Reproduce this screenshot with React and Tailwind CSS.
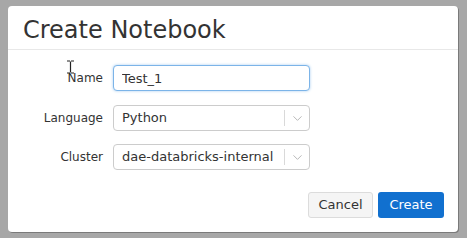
import { ChevronDown } from 'lucide-react';

function SelectBox({ value }) {
  return (
    <div className="flex h-[26px] w-[197px] items-center rounded-[4px] border border-[#cccccc] bg-white pl-[8px]">
      <span className="flex-1 truncate text-[13px] text-[#333]">{value}</span>
      <span className="h-[16px] w-px bg-[#d9d9d9]" />
      <span className="flex w-[24px] items-center justify-center text-[#b3b3b3]">
        <ChevronDown size={15} strokeWidth={1.5} />
      </span>
    </div>
  );
}

function Row({ label, children, className = '' }) {
  return (
    <div className={`flex items-center ${className}`}>
      <label className="w-[95px] text-right text-[12px] text-[#333]">{label}</label>
      <div className="ml-[10px]">{children}</div>
    </div>
  );
}

export default function App() {
  return (
    <div
      className="h-[238px] w-[467px] bg-[#a7a7a7] pl-[8px] pt-[6px]"
      style={{ fontFamily: '"DejaVu Sans", sans-serif' }}
    >
      <div className="relative flex h-[226px] w-[450px] flex-col rounded-[4px] bg-white shadow-[1px_1px_0_#7a7a7a]">
        {/* header */}
        <div className="flex h-[44px] items-center border-b border-[#e8e8e8] pl-[15px] pt-[4px]">
          <h1 className="text-[24px] leading-none text-[#333]">Create Notebook</h1>
        </div>

        {/* form */}
        <div className="flex flex-col pt-[15px]">
          <Row label="Name">
            <input
              readOnly
              value="Test_1"
              className="h-[26px] w-[197px] rounded-[4px] border border-[#7cb4e8] bg-white px-[8px] text-[13px] text-[#333] shadow-[0_0_3px_#a6cdf0] outline-none"
            />
          </Row>
          <Row label="Language" className="mt-[14px]">
            <SelectBox value="Python" />
          </Row>
          <Row label="Cluster" className="mt-[13px]">
            <SelectBox value="dae-databricks-internal" />
          </Row>
        </div>

        {/* footer */}
        <div className="mt-[22px] flex justify-end gap-[5px] pr-[14px]">
          <button className="h-[26px] w-[65px] rounded-[3px] border border-[#dcdcdc] bg-[#f5f5f5] text-[13px] text-[#333]">
            Cancel
          </button>
          <button className="h-[26px] w-[66px] rounded-[3px] bg-[#1170cf] text-[13px] text-white">
            Create
          </button>
        </div>

        {/* mouse cursor */}
        <svg className="absolute left-[58px] top-[54px]" width="9" height="14" viewBox="0 0 9 14">
          <path d="M1 1h3m1 0h3M4.5 1.5v11M1 13h3m1 0h3" stroke="#222" strokeWidth="1.2" fill="none" />
        </svg>
      </div>
    </div>
  );
}
